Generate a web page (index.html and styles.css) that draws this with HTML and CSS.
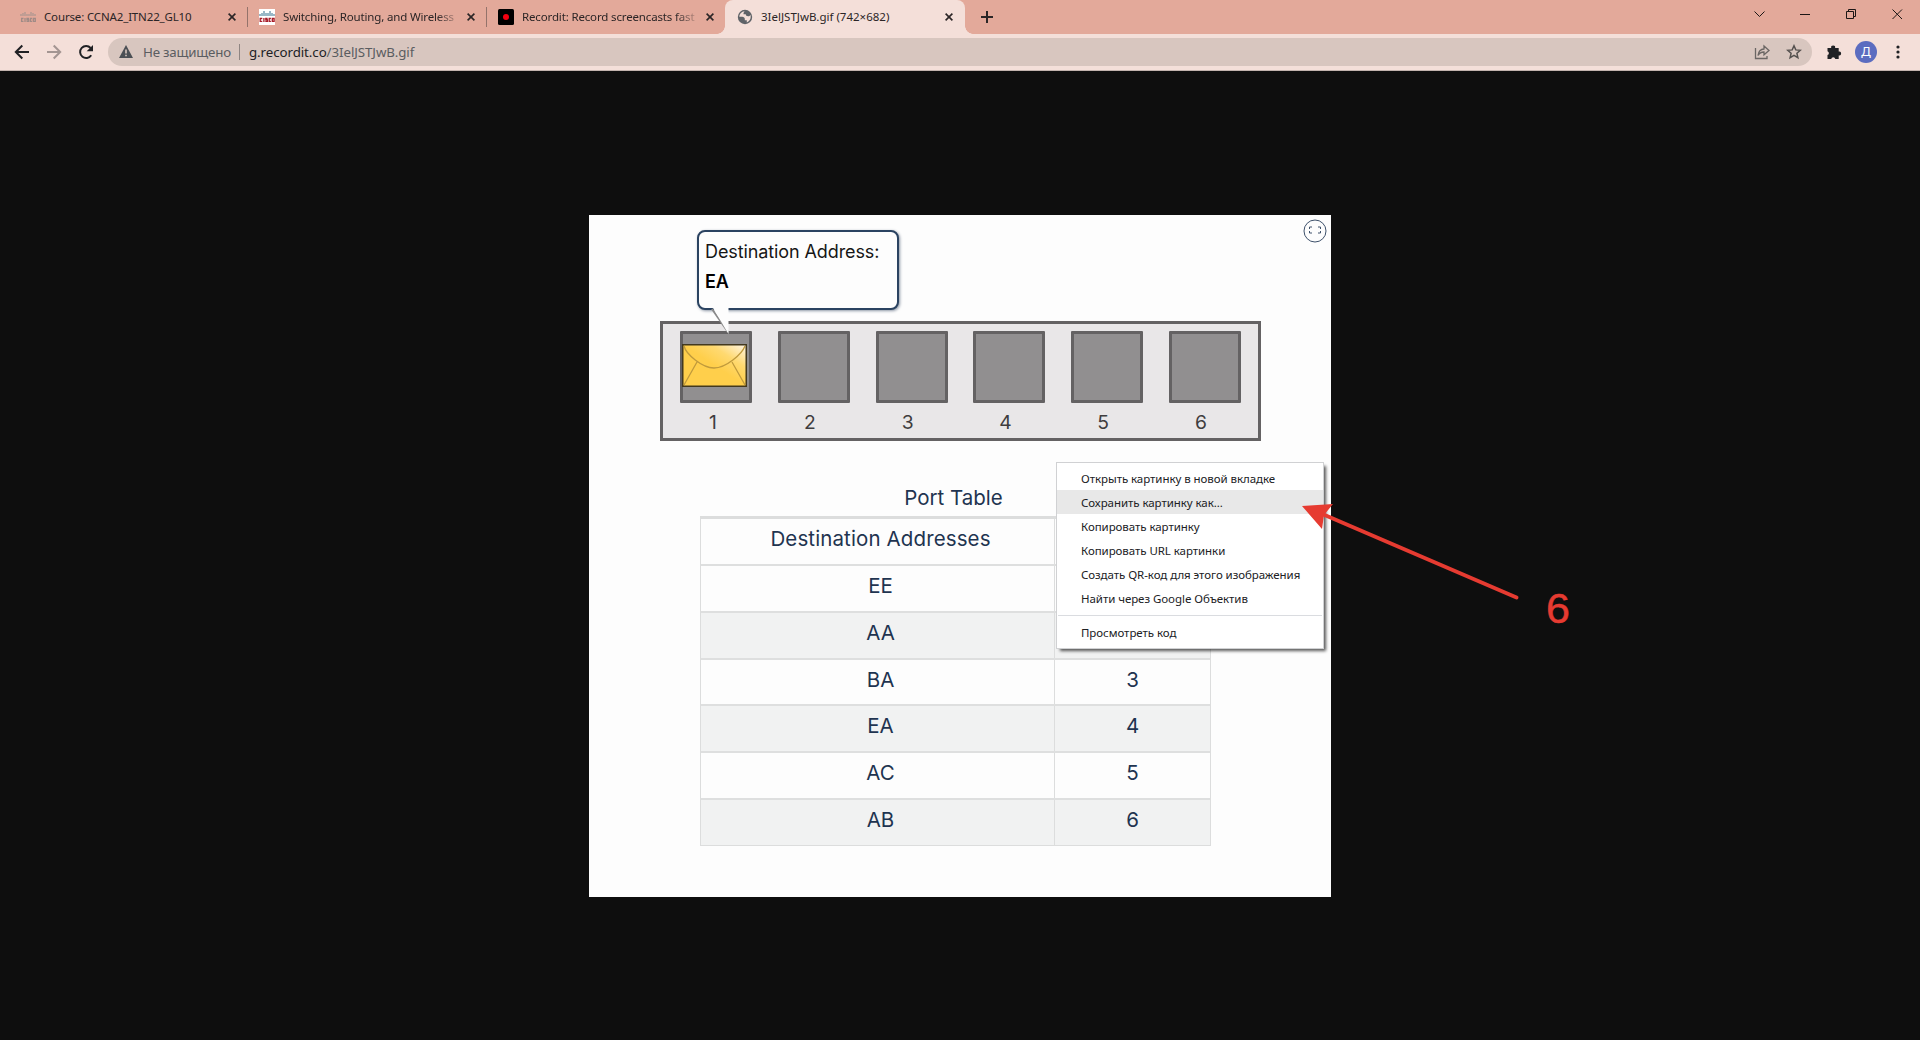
FILE: index.html
```html
<!DOCTYPE html>
<html lang="ru">
<head>
<meta charset="utf-8">
<title>3IelJSTJwB.gif (742×682)</title>
<link rel="stylesheet" href="styles.css">
</head>
<body>
<header class="tabs">
  <div class="tab tab-course">
    <svg class="fav" viewBox="0 0 16 16"><g stroke="#a99690" stroke-width="1.2"><path d="M1 5v2M3 4v3M5 3v4M7 5v2M9 5v2M11 3v4M13 4v3M15 5v2"/></g><g fill="none" stroke="#a08b86" stroke-width="1.3"><path d="M3.5 9.500H1.600v2.800h1.900M5 9v4M9 9.500H7v1.300h1.600v1.500H6.500M12 9.500h-1.600v2.800H12M13.300 9.500h2v2.800h-2z"/></g></svg>
    <span class="title tight">Course: CCNA2_ITN22_GL10</span>
    <svg class="x" viewBox="0 0 8 8"><path d="M.6.6l6.800 6.800M7.400.6L.6 7.400"/></svg>
  </div>
  <div class="tab tab-split">
    <svg class="fav" viewBox="0 0 16 16"><path fill="#fff" d="M0 0h16v16H0z"/><g stroke="#33708e" stroke-width="1"><path d="M1 5v2M3 4v3M5 2v5M7 4v3M9 4v3M11 2v5M13 4v3M15 5v2"/></g><g fill="none" stroke="#a81c28" stroke-width="1.300"><path d="M3.300 9.500H1.200v2.900h2.100M4.900 9v4M8.600 9.500H6.800v1.400h1.600v1.500H6.300M11.900 9.500h-1.700v2.900h1.700M13.300 9.500h1.800v2.900h-1.800z"/></g></svg>
    <span class="title tight fade">Switching, Routing, and Wireless</span>
    <svg class="x" viewBox="0 0 8 8"><path d="M.6.6l6.800 6.800M7.400.6L.6 7.400"/></svg>
  </div>
  <div class="tab tab-split">
    <svg class="fav" viewBox="0 0 16 16"><rect width="16" height="16" rx="1.500" fill="#000"/><circle cx="8" cy="8" r="3" fill="#f40010"/></svg>
    <span class="title tight fade">Recordit: Record screencasts fast</span>
    <svg class="x" viewBox="0 0 8 8"><path d="M.6.6l6.800 6.800M7.400.6L.6 7.400"/></svg>
  </div>
  <div class="tab active">
    <svg class="fav" viewBox="0 0 16 16"><circle cx="8" cy="8" r="7.200" fill="#5f6368"/><path fill="#f4dfd9" d="M7.600 2.200c-3 .3-5.200 2.700-5.300 5.600h2.900c1.500 0 2.600.9 2.600 2.300v1.100h2v2.200c2.300-.7 3.900-2.900 3.900-5.400 0-.8-.1-1.500-.4-2.200-.3 1-1 1.500-2.200 1.500-1.600 0-2.300-.7-2.300-2H6.500c0-1.500.3-2.200 1.100-3.100z"/></svg>
    <span class="title">3IelJSTJwB.gif (742×682)</span>
    <svg class="x" viewBox="0 0 8 8"><path d="M.6.6l6.800 6.800M7.400.6L.6 7.400"/></svg>
  </div>
  <svg class="plus" viewBox="0 0 12 12"><path d="M6 0v12M0 6h12"/></svg>
  <div class="window">
    <svg viewBox="0 0 46 28"><path d="M18.500 11.500l5 5 5-5"/></svg>
    <svg viewBox="0 0 46 28"><path d="M18 14.500h10"/></svg>
    <svg viewBox="0 0 46 28"><path d="M18.500 11.500h7v7h-7zM20.500 11.500v-2h7v7h-2"/></svg>
    <svg viewBox="0 0 46 28"><path d="M18.500 9.500l9.500 9.500M28 9.500L18.500 19"/></svg>
  </div>
</header>
<div class="toolbar">
  <svg class="nav" viewBox="0 0 16 16"><path d="M15 8H2M8.300 1.500L1.800 8l6.500 6.500"/></svg>
  <svg class="nav dim" viewBox="0 0 16 16"><path d="M1 8h13M7.700 1.500L14.200 8l-6.500 6.500"/></svg>
  <svg class="nav" viewBox="0 0 16 16"><path d="M13.200 11.200A6 6 0 1 1 12.600 4"/><path class="solid" d="M15 1v6.300H8.700z"/></svg>
  <div class="omnibox">
    <svg class="warn" viewBox="0 0 14 13"><path fill="#4b4f54" d="M7 0l7 13H0z"/><path stroke="#d8c6bf" stroke-width="1.600" d="M7 4.500v4M7 9.700v1.600"/></svg>
    <span class="unsafe">Не защищено</span>
    <i class="bar"></i>
    <span class="url">g.recordit.co<span class="path">/3IelJSTJwB.gif</span></span>
    <svg class="share" viewBox="0 0 16 16"><path d="M1.500 4v10.500H13V12M4 11.500c.5-4 2.500-6.300 6-6.500V2l5 4.500-5 4.300V8C7.200 8 5.400 9 4 11.500z"/></svg>
    <svg class="star" viewBox="0 0 16 16"><path d="M8 1.800l1.800 4.100 4.500.4-3.400 3 1 4.400L8 11.400l-3.900 2.300 1-4.400-3.400-3 4.500-.4z"/></svg>
  </div>
  <svg class="puzzle" viewBox="0 0 16 16"><path d="M1.500 4h3.700a2 2 0 1 1 3.900 0h3.600v3.600a2 2 0 1 1 0 3.900V15H9.300a2.100 2.100 0 0 0-4.100 0H1.500v-3.900a2 2 0 0 0 0-3.800z"/></svg>
  <span class="avatar">Д</span>
  <svg class="dots" viewBox="0 0 4 14"><circle cx="2" cy="2" r="1.600"/><circle cx="2" cy="7" r="1.600"/><circle cx="2" cy="12" r="1.600"/></svg>
</div>
<main class="viewer">
  <section class="picture">
    <svg class="expand" viewBox="0 0 24 24"><circle cx="12" cy="12" r="11"/><path d="M9 8H6.500v2M15 8h2.500v2M9 14H6.500v-2M15 14h2.500v-2"/></svg>
    <div class="callout">
      <p>Destination Address:</p>
      <p><b>EA</b></p>
      <svg class="tail" viewBox="0 0 22 28"><path class="tail-shade" d="M3 1l16 23"/><path class="tail-fill" d="M4 0h15.500v26z"/></svg>
    </div>
    <div class="switch">
      <div class="port"><div class="socket"><svg class="mail" viewBox="0 0 65 43"><defs><linearGradient id="paper" x1="0" y1="1" x2="1" y2="0"><stop offset=".5" stop-color="#ffcf4b"/><stop offset=".72" stop-color="#ffd970"/><stop offset="1" stop-color="#fff6e8"/></linearGradient></defs><rect x=".75" y=".75" width="63.500" height="41.500" fill="url(#paper)" stroke="#43391f" stroke-width="1.500"/><path fill="none" stroke="#c09a3c" stroke-width="1.300" d="M2 2C4 10 20 24 32 24S60 10 63 2M2 41l13-23M63 41L50 18"/></svg></div><span>1</span></div>
      <div class="port"><div class="socket"></div><span>2</span></div>
      <div class="port"><div class="socket"></div><span>3</span></div>
      <div class="port"><div class="socket"></div><span>4</span></div>
      <div class="port"><div class="socket"></div><span>5</span></div>
      <div class="port"><div class="socket"></div><span>6</span></div>
    </div>
    <h1>Port Table</h1>
    <div class="table">
      <div class="row"><div class="wide">Destination Addresses</div><div></div></div>
      <div class="row"><div>EE</div><div></div></div>
      <div class="row alt"><div>AA</div><div></div></div>
      <div class="row"><div>BA</div><div>3</div></div>
      <div class="row alt"><div>EA</div><div>4</div></div>
      <div class="row"><div>AC</div><div>5</div></div>
      <div class="row alt"><div>AB</div><div>6</div></div>
    </div>
  </section>
</main>
<nav class="menu">
  <div class="item">Открыть картинку в новой вкладке</div>
  <div class="item hover">Сохранить картинку как...</div>
  <div class="item">Копировать картинку</div>
  <div class="item">Копировать URL картинки</div>
  <div class="item">Создать QR-код для этого изображения</div>
  <div class="item">Найти через Google Объектив</div>
  <hr>
  <div class="item">Просмотреть код</div>
</nav>
<svg class="arrow" viewBox="0 0 230 110"><path class="shaft" d="M20 13l196.500 84.500"/><path class="head" d="M2 6l31-2-9 11-2 14z"/></svg>
<span class="step">6</span>
</body>
</html>
```
FILE: styles.css
```css
* { box-sizing: border-box; }
body { margin: 0; width: 1920px; height: 1040px; overflow: hidden; display: flex; flex-direction: column; background: #0e0e0e; font: 11.5px/16px "Noto Sans", sans-serif; color: #2b2526; }
svg { display: block; flex: none; fill: none; }
p, h1 { margin: 0; }

.tabs { height: 34px; display: flex; background: #e3a99a; }
.tab { width: 239px; height: 34px; display: flex; align-items: center; padding: 0 11px; }
.tab-course { width: 247px; padding-left: 20px; }
.tab-split { position: relative; padding-left: 12px; }
.tab-split::before { content: ""; position: absolute; left: 0; top: 7px; width: 1px; height: 20px; background: #94736b; }
.active { width: 240px; padding-left: 12px; padding-right: 12px; background: #f4dfd9; border-radius: 8px 8px 0 0; position: relative; }
.active::before, .active::after { content: ""; position: absolute; bottom: 0; width: 8px; height: 8px; }
.active::before { left: -8px; background: radial-gradient(circle at 0 0, transparent 7.5px, #f4dfd9 8px); }
.active::after { right: -8px; background: radial-gradient(circle at 100% 0, transparent 7.5px, #f4dfd9 8px); }
.fav { width: 16px; height: 16px; margin-right: 8px; }
.title { white-space: nowrap; }
.tight { letter-spacing: -.15px; }
.fade { width: 174px; -webkit-mask-image: linear-gradient(90deg, #000 88%, transparent 103%); mask-image: linear-gradient(90deg, #000 88%, transparent 103%); }
.x { width: 8px; height: 8px; margin-left: auto; stroke: #2b2526; stroke-width: 1.6; }
.plus { width: 12px; height: 12px; margin: 11px 0 0 16px; stroke: #2b2526; stroke-width: 2; }
.window { margin-left: auto; display: flex; }
.window svg { width: 46px; height: 28px; stroke: #1c1615; }

.toolbar { height: 37px; display: flex; align-items: center; padding: 0 20px 1px 14px; background: #f4dfd9; border-bottom: 1px solid #c2b3ad; }
.nav { width: 16px; height: 16px; margin-right: 16px; stroke: #202124; stroke-width: 2; }
.nav .solid { fill: #202124; stroke: none; }
.dim { stroke: #a39592; }
.omnibox { width: 1704px; height: 28px; margin-left: -2px; border-radius: 14px; background: #d8c6bf; display: flex; align-items: center; padding: 0 10px 0 11px; font-size: 13.3px; }
.warn { width: 14px; height: 13px; margin-right: 10px; }
.unsafe { width: 96px; color: #5b5d61; white-space: nowrap; letter-spacing: -.2px; }
.bar { width: 1px; height: 16px; background: #8f8582; margin-right: 9px; }
.url { color: #202124; letter-spacing: -.07px; }
.path { color: #5b5d61; }
.share { width: 16px; height: 16px; margin-left: auto; margin-right: 16px; stroke: #6b6664; stroke-width: 1.3; }
.star { width: 16px; height: 16px; stroke: #55514f; stroke-width: 1.5; }
.puzzle { width: 16px; height: 16px; margin-left: 14px; fill: #202124; }
.avatar { width: 22px; height: 22px; margin: 0 auto 0 13px; border-radius: 50%; background: #5b6cc0; color: #fff; font-size: 13px; line-height: 21px; text-align: center; }
.dots { width: 4px; height: 14px; fill: #202124; }

.viewer { flex: 1; display: flex; justify-content: center; padding-top: 144px; font-family: Inter, sans-serif; }
.picture { position: relative; width: 742px; height: 682px; background: #fdfdfd; padding-top: 15px; }
.expand { position: absolute; right: 4px; top: 4px; width: 24px; height: 24px; stroke: #3e516b; }
.callout { position: relative; z-index: 1; width: 202px; height: 80px; margin-left: 108px; padding: 5px 0 0 6px; border: 2px solid #2b4361; border-radius: 8px; background: #fdfdfd; box-shadow: 1px 1px 3px #8c96a5; font-size: 18px; line-height: 30px; letter-spacing: -.1px; color: #161616; }
.callout b { font-weight: 600; color: #000; }
.tail { position: absolute; left: 10px; top: 76px; width: 22px; height: 28px; }
.tail-fill { fill: #fdfdfd; }
.tail-shade { stroke: #8a8a8a; stroke-width: 2; }
.switch { width: 601px; height: 120px; margin: 11px 0 0 71px; padding: 7px 17px 0; border: 3px solid #646263; background: #e9e7e8; display: flex; justify-content: space-between; }
.port { width: 72px; font-size: 19.3px; line-height: 24px; color: #3f3d3e; text-align: center; }
.port span { display: block; margin: 7px 8px 0 0; }
.port:first-child span { margin-right: 6px; }
.socket { height: 72px; border: 3px solid #646263; background: #918f90; border-radius: 1px; }
.mail { width: 65px; height: 43px; margin: 10px 0 0 -1px; }
h1 { margin: 45px 0 0 109px; width: 511px; text-align: center; font-size: 20.5px; font-weight: 400; line-height: 24px; color: #1f3450; }
.table { width: 511px; height: 330px; margin: 6px 0 0 111px; border: 1px solid #dcdddd; border-top-width: 3px; display: flex; flex-direction: column; font-size: 20.5px; color: #1f3450; }
.row { flex: 1; display: flex; border-bottom: 2px solid #dedfdf; line-height: 24px; text-align: center; }
.row:last-child { border-bottom-width: 0; }
.row > div { width: 155px; padding-top: 8px; }
.row > div:first-child { width: 354px; padding-left: 6px; border-right: 1px solid #dcdddd; }
.wide { letter-spacing: .12px; }
.alt { background: #f1f2f2; }

.menu { position: absolute; left: 1056px; top: 462px; width: 268px; height: 187px; padding: 3px 0; background: #fff; border: 1px solid #d0d1d3; box-shadow: 3px 3px 3px -1px rgba(0,0,0,.65); color: #202124; letter-spacing: -.06px; }
.item { height: 24px; padding: 5px 0 0 24px; line-height: 16px; white-space: nowrap; }
.hover { background: #e8e8e8; }
.menu hr { margin: 5px 1px 4px; border: 0; border-top: 1px solid #dadce0; }
.arrow { position: absolute; left: 1300px; top: 500px; width: 230px; height: 110px; }
.shaft { stroke: #e63b31; stroke-width: 4; stroke-linecap: round; }
.head { fill: #e63b31; }
.step { position: absolute; left: 1546px; top: 584px; font: 43px/48px "Liberation Sans", sans-serif; -webkit-text-stroke: .5px #e63b31; color: #e63b31; }
```
